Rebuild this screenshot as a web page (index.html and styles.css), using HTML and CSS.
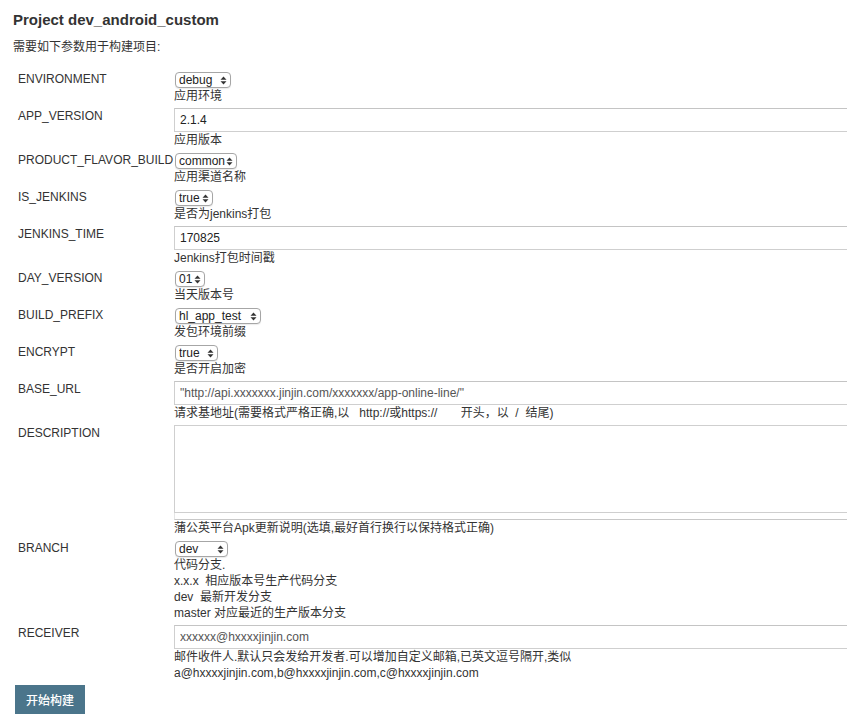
FILE: index.html
```html
<!DOCTYPE html>
<html lang="zh-CN">
<head>
<meta charset="utf-8">
<title>Project dev_android_custom</title>
<link rel="stylesheet" href="styles.css">
</head>
<body>
<div class="page">
  <h1 class="title">Project dev_android_custom</h1>
  <p class="intro">需要如下参数用于构建项目:</p>
  <form class="params">
    <div class="param">
      <div class="name">ENVIRONMENT</div>
      <div class="value">
        <select class="sel sel-env"><option>debug</option></select>
        <div class="desc">应用环境</div>
      </div>
    </div>
    <div class="param">
      <div class="name">APP_VERSION</div>
      <div class="value">
        <input class="txt" type="text" value="2.1.4">
        <div class="desc">应用版本</div>
      </div>
    </div>
    <div class="param">
      <div class="name">PRODUCT_FLAVOR_BUILD</div>
      <div class="value">
        <select class="sel sel-flavor"><option>common</option></select>
        <div class="desc">应用渠道名称</div>
      </div>
    </div>
    <div class="param">
      <div class="name">IS_JENKINS</div>
      <div class="value">
        <select class="sel sel-bool"><option>true</option></select>
        <div class="desc">是否为jenkins打包</div>
      </div>
    </div>
    <div class="param">
      <div class="name">JENKINS_TIME</div>
      <div class="value">
        <input class="txt" type="text" value="170825">
        <div class="desc">Jenkins打包时间戳</div>
      </div>
    </div>
    <div class="param">
      <div class="name">DAY_VERSION</div>
      <div class="value">
        <select class="sel sel-day"><option>01</option></select>
        <div class="desc">当天版本号</div>
      </div>
    </div>
    <div class="param">
      <div class="name">BUILD_PREFIX</div>
      <div class="value">
        <select class="sel sel-prefix"><option>hl_app_test</option></select>
        <div class="desc">发包环境前缀</div>
      </div>
    </div>
    <div class="param">
      <div class="name">ENCRYPT</div>
      <div class="value">
        <select class="sel sel-encrypt"><option>true</option></select>
        <div class="desc">是否开启加密</div>
      </div>
    </div>
    <div class="param">
      <div class="name">BASE_URL</div>
      <div class="value">
        <input class="txt txt-url" type="text" value="&quot;http://api.xxxxxxx.jinjin.com/xxxxxxx/app-online-line/&quot;">
        <div class="desc">请求基地址(需要格式严格正确,以&nbsp;&nbsp;&nbsp;http://或https://&nbsp;&nbsp;&nbsp;&nbsp;&nbsp;&nbsp;&nbsp;开头，以 &nbsp;/ &nbsp;结尾)</div>
      </div>
    </div>
    <div class="param">
      <div class="name">DESCRIPTION</div>
      <div class="value">
        <textarea class="area"></textarea>
        <div class="area-handle"></div>
        <div class="desc">蒲公英平台Apk更新说明(选填,最好首行换行以保持格式正确)</div>
      </div>
    </div>
    <div class="param">
      <div class="name">BRANCH</div>
      <div class="value">
        <select class="sel sel-branch"><option>dev</option></select>
        <div class="desc">代码分支.<br>x.x.x&nbsp; 相应版本号生产代码分支<br>dev&nbsp; 最新开发分支<br>master 对应最近的生产版本分支</div>
      </div>
    </div>
    <div class="param">
      <div class="name">RECEIVER</div>
      <div class="value">
        <input class="txt txt-mail" type="text" value="xxxxxx@hxxxxjinjin.com">
        <div class="desc">邮件收件人.默认只会发给开发者.可以增加自定义邮箱,已英文逗号隔开,类似<br>a@hxxxxjinjin.com,b@hxxxxjinjin.com,c@hxxxxjinjin.com</div>
      </div>
    </div>
    <button class="build" type="button">开始构建</button>
  </form>
</div>
</body>
</html>
```

FILE: styles.css
```css
html, body {
  margin: 0;
  padding: 0;
  overflow: hidden;
  background: #fff;
}

body {
  font-family: "Liberation Sans", Arial, "Noto Sans CJK SC", sans-serif;
  font-size: 12px;
  color: #333;
}

.page {
  padding: 10px 0 0 13px;
}

.title {
  margin: 0;
  font-size: 15px;
  line-height: 20px;
  font-weight: bold;
  color: #333;
}

.intro {
  margin: 9px 0 0 0;
  line-height: 16px;
}

.params {
  margin: 16px 0 0 0;
}

.param {
  display: grid;
  grid-template-columns: 156px 720px;
  margin: 0 0 4px 5px;
}

.name {
  line-height: 16px;
  white-space: nowrap;
}

.value {
  display: flex;
  flex-direction: column;
  align-items: flex-start;
}

.desc {
  line-height: 16px;
  white-space: nowrap;
}

.sel {
  -webkit-appearance: none;
  appearance: none;
  box-sizing: border-box;
  height: 16px;
  margin: 1px 0 0 1px;
  padding: 0 9px 0 3px;
  border: 1px solid #a6a6a6;
  border-radius: 4px;
  background-color: #fff;
  background-image: url("data:image/svg+xml;utf8,<svg xmlns='http://www.w3.org/2000/svg' width='7' height='9' viewBox='0 0 7 9'><path d='M3.5 0.5 L6.5 3.8 L0.5 3.8 Z M3.5 8.5 L6.5 5.2 L0.5 5.2 Z' fill='%23333'/></svg>");
  background-repeat: no-repeat;
  background-position: right 3px center;
  font-family: "Liberation Sans", Arial, sans-serif;
  font-size: 12px;
  line-height: 14px;
  color: #222;
  box-shadow: 0 1px 1px rgba(0,0,0,0.08);
}

.sel-env { width: 56px; }
.sel-flavor { width: 62px; }
.sel-bool { width: 38px; }
.sel-day { width: 30px; }
.sel-prefix { width: 86px; }
.sel-encrypt { width: 43px; }
.sel-branch { width: 53px; }

.txt {
  box-sizing: border-box;
  width: 720px;
  height: 24px;
  margin: 0;
  padding: 0 5px;
  border: 1px solid #cfcfcf;
  border-top-color: #c4c4c4;
  font-family: "Liberation Sans", Arial, sans-serif;
  font-size: 12px;
  color: #222;
  background: #fff;
  outline: none;
}

.txt-url, .txt-mail {
  color: #555;
}

.area {
  box-sizing: border-box;
  width: 720px;
  height: 88px;
  margin: 0;
  padding: 3px 5px;
  border: 1px solid #cfcfcf;
  resize: none;
  font-family: "Liberation Sans", Arial, sans-serif;
  font-size: 12px;
  display: block;
}

.area-handle {
  box-sizing: border-box;
  width: 720px;
  height: 7px;
  border-bottom: 1px solid #c8c8c8;
  border-left: 1px solid #e6e6e6;
  background: #fff;
}

.build {
  display: block;
  width: 70px;
  height: 29px;
  margin: 0 0 0 2px;
  padding: 0;
  border: none;
  background: #4b758b;
  color: #fff;
  font-family: "Noto Sans CJK SC", sans-serif;
  font-size: 12px;
  font-weight: 500;
  cursor: pointer;
}
```
